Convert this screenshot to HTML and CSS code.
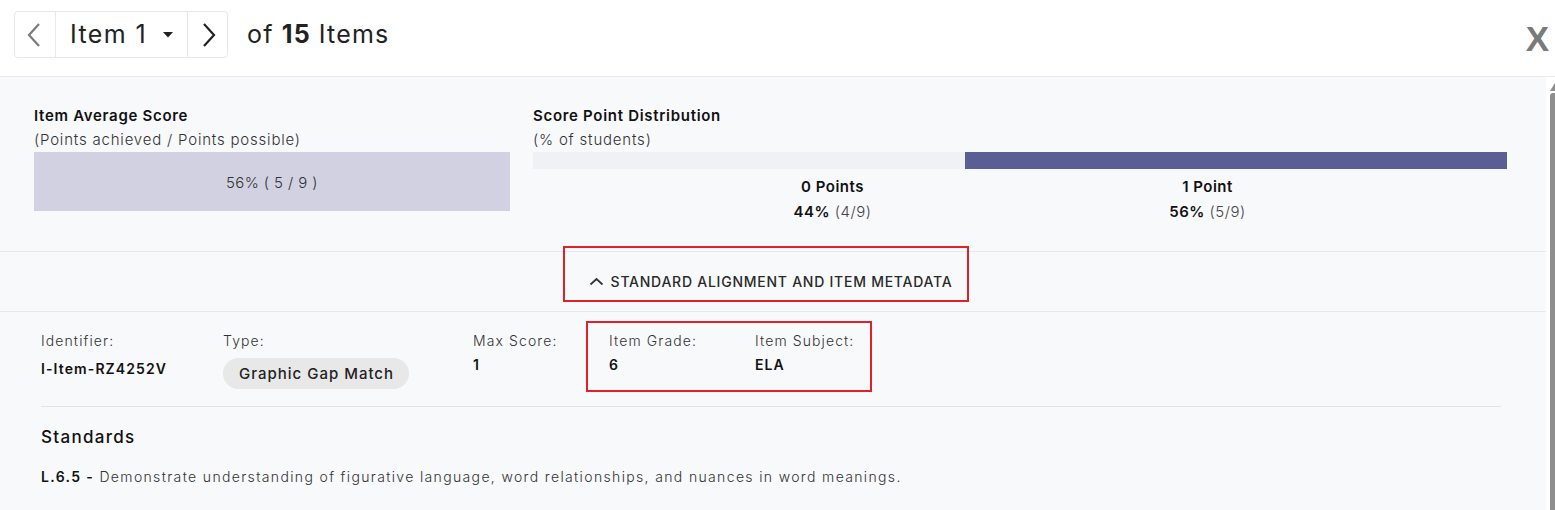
FILE: index.html
```html
<!DOCTYPE html>
<html>
<head>
<meta charset="utf-8">
<link rel="stylesheet" href="styles.css">
</head>
<body>
<div class="topbar">
  <div class="nav">
    <div class="nav-btn prev">
      <svg width="16" height="24" viewBox="0 0 16 24"><path d="M13 1 L3 12 L13 23" fill="none" stroke="#7b7b7b" stroke-width="2.2"/></svg>
    </div>
    <div class="item-select">
      <span>Item 1</span>
      <svg class="caret" width="10" height="6" viewBox="0 0 10 6"><path d="M0 0 H10 L5 5.5 Z" fill="#222"/></svg>
    </div>
    <div class="nav-btn next">
      <svg width="16" height="24" viewBox="0 0 16 24"><path d="M3 1 L13 12 L3 23" fill="none" stroke="#222" stroke-width="2.2"/></svg>
    </div>
  </div>
  <div class="count"><span>of</span><b>15</b><span>Items</span></div>
  <div class="close">X</div>
</div>
<div class="page">
  <div class="main">
    <section class="stats">
      <div class="avg">
        <div class="title">Item Average Score</div>
        <div class="sub">(Points achieved / Points possible)</div>
        <div class="avg-bar">56% ( 5 / 9 )</div>
      </div>
      <div class="dist">
        <div class="title">Score Point Distribution</div>
        <div class="sub">(% of students)</div>
        <div class="dist-bar">
          <div class="seg seg-0" style="width:44.4%"></div>
          <div class="seg seg-1" style="width:55.6%"></div>
        </div>
        <div class="dist-labels">
          <div class="dl">
            <div class="dl-name">0 Points</div>
            <div class="dl-val"><b>44%</b> (4/9)</div>
          </div>
          <div class="dl">
            <div class="dl-name">1 Point</div>
            <div class="dl-val"><b>56%</b> (5/9)</div>
          </div>
        </div>
      </div>
    </section>
    <section class="toggle">
      <div class="toggle-btn">
        <svg width="15" height="9" viewBox="0 0 15 9"><path d="M1.5 7.5 L7.5 2 L13.5 7.5" fill="none" stroke="#333" stroke-width="1.7"/></svg>
        <span>STANDARD ALIGNMENT AND ITEM METADATA</span>
      </div>
      <div class="mark mark-toggle"></div>
    </section>
    <section class="meta">
      <div class="meta-row">
        <div class="field">
          <div class="label">Identifier:</div>
          <div class="value value-id">I-Item-RZ4252V</div>
        </div>
        <div class="field">
          <div class="label">Type:</div>
          <div class="chip">Graphic Gap Match</div>
        </div>
        <div class="field">
          <div class="label">Max Score:</div>
          <div class="value">1</div>
        </div>
        <div class="field">
          <div class="label">Item Grade:</div>
          <div class="value">6</div>
        </div>
        <div class="field">
          <div class="label">Item Subject:</div>
          <div class="value">ELA</div>
        </div>
        <div class="mark mark-meta"></div>
      </div>
      <div class="rule"></div>
      <h3 class="std-title">Standards</h3>
      <p class="std"><b>L.6.5 -</b> Demonstrate understanding of figurative language, word relationships, and nuances in word meanings.</p>
    </section>
  </div>
  <div class="scroll">
    <div class="scroll-arrow"></div>
    <div class="scroll-thumb"></div>
  </div>
</div>
</body>
</html>
```
FILE: styles.css
```css
* { box-sizing: border-box; }
html, body { margin: 0; padding: 0; }
body {
  font-family: Inter, "Open Sans", sans-serif;
  color: #222;
  background: #fff;
  width: 1555px;
  height: 510px;
  overflow: hidden;
}
.topbar {
  height: 77px;
  display: flex;
  align-items: flex-start;
  padding: 11px 0 0 14px;
  border-bottom: 1px solid #e8eaee;
  background: #fff;
}
.nav {
  display: flex;
  height: 47px;
  border: 1px solid #e6e8ec;
  border-radius: 4px;
}
.nav-btn {
  display: flex;
  align-items: center;
  justify-content: center;
}
.prev { width: 41px; border-right: 1px solid #e6e8ec; padding-right: 2px; }
.next { width: 40px; border-left: 1px solid #e6e8ec; padding-left: 2px; }
.item-select {
  width: 131px;
  display: flex;
  align-items: center;
  padding-left: 14px;
  font-size: 25px;
  letter-spacing: 1.4px;
  color: #222;
  padding-bottom: 2px;
}
.caret { margin-left: 16px; margin-top: 3px; }
.count {
  margin-left: 19px;
  height: 45px;
  display: flex;
  align-items: center;
  gap: 8px;
  font-size: 25px;
  letter-spacing: 1.2px;
  color: #222;
}
.count b { font-weight: 700; }
.close {
  margin-left: auto;
  margin-right: 6px;
  margin-top: 8px;
  font-family: "Liberation Sans", Arial, sans-serif;
  font-weight: 700;
  font-size: 35px;
  line-height: 40px;
  color: #7a7a7a;
}
.page {
  display: flex;
  height: 433px;
}
.main {
  width: 1546px;
  background: #f8f9fb;
}
.scroll {
  flex: 1;
  background: #fff;
  padding-left: 4px;
  padding-top: 6px;
}
.scroll-arrow {
  width: 0; height: 0;
  border-left: 5px solid transparent;
  border-bottom: 8px solid #8e8e8e;
  margin-bottom: 2px;
}
.scroll-thumb {
  height: 420px;
  background: #8e8e8e;
  border-radius: 3px 0 0 0;
}
.stats {
  display: flex;
  gap: 23px;
  padding: 27px 39px 27px 34px;
  border-bottom: 1px solid #e6e8ec;
}
.avg { width: 476px; }
.dist { flex: 1; }
.title {
  font-size: 15px;
  font-weight: 600;
  line-height: 24px;
  letter-spacing: 0.7px;
  color: #111;
}
.sub {
  font-size: 15px;
  line-height: 24px;
  font-weight: 300;
  letter-spacing: 0.8px;
  color: #333;
}
.avg-bar {
  height: 59px;
  background: #d2d1e2;
  display: flex;
  align-items: center;
  justify-content: center;
  font-size: 15px;
  font-weight: 300;
  letter-spacing: 0.4px;
  color: #333;
  padding-top: 2px;
}
.dist-bar {
  height: 17px;
  display: flex;
}
.seg-0 { background: #f0f1f4; }
.seg-1 { background: #5b5d95; }
.dist-labels {
  display: flex;
  justify-content: center;
  padding-top: 5px;
}
.dl {
  width: 375px;
  text-align: center;
  font-size: 15px;
  line-height: 25px;
  letter-spacing: 0.5px;
}
.dl-name { font-weight: 600; color: #111; }
.dl-val { color: #444; font-weight: 300; }
.dl-val b { color: #111; font-weight: 600; }
.toggle {
  position: relative;
  height: 60px;
  display: flex;
  align-items: center;
  justify-content: center;
  border-bottom: 1px solid #e6e8ec;
}
.toggle-btn {
  display: flex;
  align-items: center;
  gap: 7px;
  margin-left: -5px;
  font-size: 14px;
  font-weight: 500;
  letter-spacing: 0.75px;
  color: #2a2a2a;
}
.mark {
  position: absolute;
  border: 2px solid #e3202a;
}
.mark-toggle { left: 563px; top: -6px; width: 406px; height: 56px; }
.meta { padding: 18px 45px 0 41px; }
.meta-row {
  position: relative;
  display: grid;
  grid-template-columns: 182px 250px 136px 146px auto;
}
.label {
  font-size: 14px;
  line-height: 22px;
  font-weight: 300;
  letter-spacing: 1.1px;
  color: #333;
}
.value {
  margin-top: 2px;
  font-size: 14px;
  line-height: 22px;
  font-weight: 600;
  letter-spacing: 1.1px;
  color: #111;
}
.value-id { margin-top: 6px; }
.chip {
  display: inline-block;
  margin-top: 6px;
  height: 31px;
  line-height: 31px;
  padding: 0 15px 0 16px;
  border-radius: 16px;
  background: #e8e8e9;
  font-size: 15px;
  font-weight: 500;
  letter-spacing: 1px;
  color: #222;
}
.mark-meta { left: 545px; top: -9px; width: 286px; height: 71px; }
.rule {
  margin-top: 17px;
  height: 1px;
  background: #e2e4e8;
}
.std-title {
  margin: 18px 0 0;
  font-size: 17px;
  font-weight: 500;
  line-height: 24px;
  letter-spacing: 1.3px;
  color: #111;
}
.std {
  margin: 17px 0 0;
  font-size: 14px;
  line-height: 22px;
  font-weight: 300;
  letter-spacing: 1.35px;
  color: #333;
}
.std b { color: #111; font-weight: 600; }
```
